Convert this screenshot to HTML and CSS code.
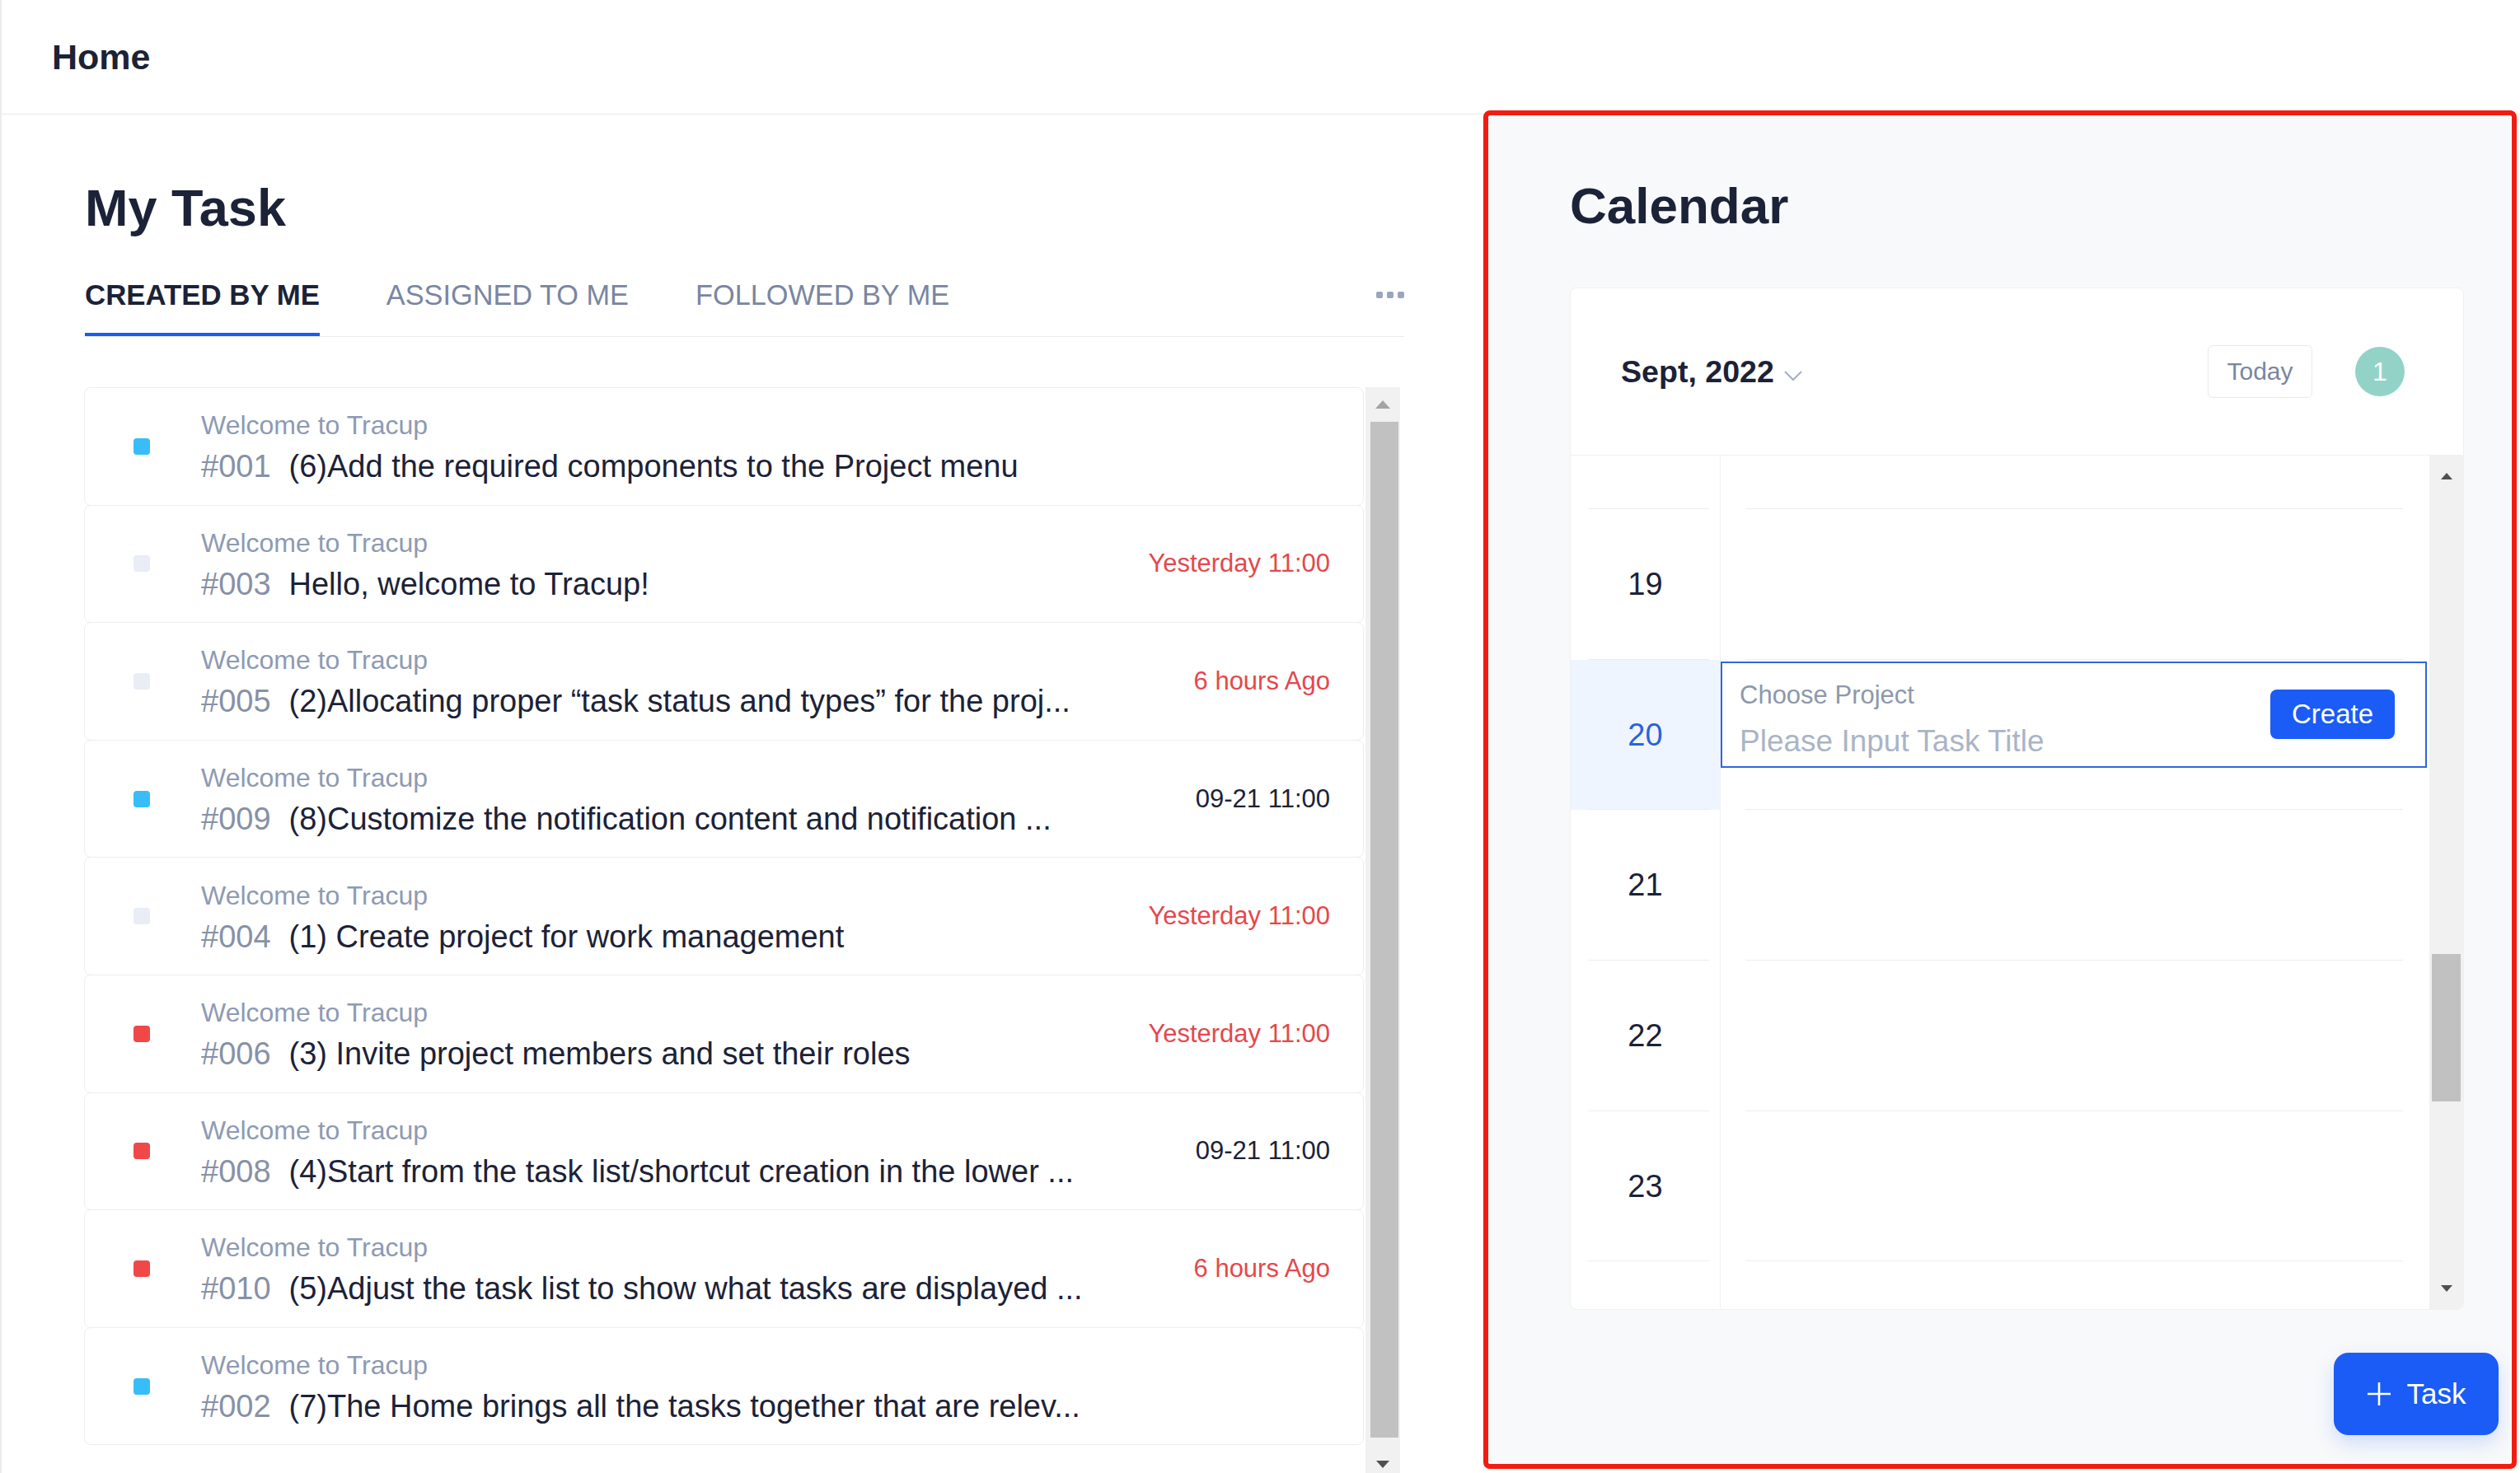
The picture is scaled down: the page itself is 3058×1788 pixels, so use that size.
FILE: index.html
```html
<!DOCTYPE html>
<html lang="en">
<head>
<meta charset="utf-8">
<title>Home</title>
<link rel="stylesheet" href="styles.css">
</head>
<body>
<div class="app">
  <header class="header"><span class="header-title">Home</span></header>
  <div class="main">
    <section class="left">
      <h1 class="heading">My Task</h1>
      <nav class="tabs">
        <span class="tab tab-active">CREATED BY ME</span>
        <span class="tab">ASSIGNED TO ME</span>
        <span class="tab">FOLLOWED BY ME</span>
        <span class="more"><i></i><i></i><i></i></span>
      </nav>
      <div class="list">
        <div class="rows">
          <div class="row">
            <span class="sq sq-blue"></span>
            <div class="txt"><div class="sub">Welcome to Tracup</div><div class="title"><span class="num">#001</span>(6)Add the required components to the Project menu</div></div>
          </div>
          <div class="row">
            <span class="sq sq-grey"></span>
            <div class="txt"><div class="sub">Welcome to Tracup</div><div class="title"><span class="num">#003</span>Hello, welcome to Tracup!</div></div>
            <span class="time time-red">Yesterday 11:00</span>
          </div>
          <div class="row">
            <span class="sq sq-grey"></span>
            <div class="txt"><div class="sub">Welcome to Tracup</div><div class="title"><span class="num">#005</span>(2)Allocating proper “task status and types” for the proj...</div></div>
            <span class="time time-red">6 hours Ago</span>
          </div>
          <div class="row">
            <span class="sq sq-blue"></span>
            <div class="txt"><div class="sub">Welcome to Tracup</div><div class="title"><span class="num">#009</span>(8)Customize the notification content and notification ...</div></div>
            <span class="time">09-21 11:00</span>
          </div>
          <div class="row">
            <span class="sq sq-grey"></span>
            <div class="txt"><div class="sub">Welcome to Tracup</div><div class="title"><span class="num">#004</span>(1) Create project for work management</div></div>
            <span class="time time-red">Yesterday 11:00</span>
          </div>
          <div class="row">
            <span class="sq sq-red"></span>
            <div class="txt"><div class="sub">Welcome to Tracup</div><div class="title"><span class="num">#006</span>(3) Invite project members and set their roles</div></div>
            <span class="time time-red">Yesterday 11:00</span>
          </div>
          <div class="row">
            <span class="sq sq-red"></span>
            <div class="txt"><div class="sub">Welcome to Tracup</div><div class="title"><span class="num">#008</span>(4)Start from the task list/shortcut creation in the lower ...</div></div>
            <span class="time">09-21 11:00</span>
          </div>
          <div class="row">
            <span class="sq sq-red"></span>
            <div class="txt"><div class="sub">Welcome to Tracup</div><div class="title"><span class="num">#010</span>(5)Adjust the task list to show what tasks are displayed ...</div></div>
            <span class="time time-red">6 hours Ago</span>
          </div>
          <div class="row">
            <span class="sq sq-blue"></span>
            <div class="txt"><div class="sub">Welcome to Tracup</div><div class="title"><span class="num">#002</span>(7)The Home brings all the tasks together that are relev...</div></div>
          </div>
        </div>
        <div class="sbar sbar-list">
          <div class="sb-up"><svg width="18" height="10" viewBox="0 0 18 10"><polygon points="9,0 18,10 0,10" fill="#a3a3a3"/></svg></div>
          <div class="sb-thumb"></div>
          <div class="sb-down"><svg width="16" height="9" viewBox="0 0 16 9"><polygon points="0,0 16,0 8,9" fill="#505050"/></svg></div>
        </div>
      </div>
    </section>

    <section class="right">
      <h1 class="heading">Calendar</h1>
      <div class="card">
        <div class="card-head">
          <span class="month">Sept, 2022</span>
          <svg class="chev" width="24" height="14" viewBox="0 0 24 14"><polyline points="2,2 12,12 22,2" fill="none" stroke="#a4afc0" stroke-width="2"/></svg>
          <span class="today">Today</span>
          <span class="badge">1</span>
        </div>
        <div class="card-body">
          <div class="days">
            <div class="day day-part-top"><div class="d-num"></div><div class="d-ev"></div></div>
            <div class="day"><div class="d-num">19</div><div class="d-ev"></div></div>
            <div class="day day-cur"><div class="d-num">20</div><div class="d-ev">
              <div class="newtask">
                <div class="nt-text"><div class="nt-proj">Choose Project</div><div class="nt-title">Please Input Task Title</div></div>
                <span class="create">Create</span>
              </div>
            </div></div>
            <div class="day"><div class="d-num">21</div><div class="d-ev"></div></div>
            <div class="day"><div class="d-num">22</div><div class="d-ev"></div></div>
            <div class="day"><div class="d-num">23</div><div class="d-ev"></div></div>
            <div class="day day-part-bottom"><div class="d-num"></div><div class="d-ev"></div></div>
          </div>
          <div class="sbar sbar-cal">
            <div class="sb-up"><svg width="14" height="8" viewBox="0 0 14 8"><polygon points="7,0 14,8 0,8" fill="#505050"/></svg></div>
            <div class="sb-thumb"></div>
            <div class="sb-down"><svg width="14" height="8" viewBox="0 0 14 8"><polygon points="0,0 14,0 7,8" fill="#505050"/></svg></div>
          </div>
        </div>
      </div>
      <div class="fab">
        <svg width="30" height="30" viewBox="0 0 30 30"><path d="M15 1V29M1 15H29" stroke="#fff" stroke-width="2.6" fill="none"/></svg>
        <span>Task</span>
      </div>
    </section>
  </div>
</div>
</body>
</html>
```

FILE: styles.css
```css
* { box-sizing: border-box; }
html, body { margin: 0; padding: 0; }
body {
  width: 3058px;
  height: 1788px;
  overflow: hidden;
  background: #ffffff;
  font-family: "Liberation Sans", Arial, sans-serif;
  color: #1c2237;
}
.app {
  height: 1788px;
  display: flex;
  flex-direction: column;
  border-left: 2px solid #ececee;
}
.header {
  height: 139px;
  flex: none;
  border-bottom: 1px solid #e8eaee;
  display: flex;
  align-items: center;
  padding-left: 61px;
}
.header-title {
  font-size: 43px;
  font-weight: 700;
  color: #1c2237;
}
.main {
  flex: 1;
  display: flex;
  min-height: 0;
}
.left {
  width: 1798px;
  flex: none;
  display: flex;
  flex-direction: column;
  padding: 77px 96px 0 101px;
}
.heading {
  margin: 0;
  font-size: 63px;
  line-height: 72px;
  font-weight: 700;
  color: #1c2237;
}
.right .heading { font-size: 62px; }
.tabs {
  margin-top: 50px;
  display: flex;
  align-items: flex-start;
  gap: 81px;
  border-bottom: 1px solid #e9ebef;
}
.tab {
  font-size: 34.3px;
  line-height: 40px;
  padding-bottom: 26px;
  border-bottom: 4px solid transparent;
  color: #7a86a1;
}
.tab-active {
  font-size: 34.8px;
  font-weight: 700;
  color: #1c2237;
  border-bottom-color: #1a5cf0;
}
.more {
  margin-left: auto;
  margin-top: 16px;
  display: flex;
  gap: 5px;
}
.more i {
  width: 8px;
  height: 8px;
  border-radius: 2px;
  background: #9aa6bd;
}
.list {
  margin-top: 61px;
  margin-left: -1px;
  flex: 1;
  min-height: 0;
  display: flex;
  overflow: hidden;
}
.rows {
  width: 1553px;
  flex: none;
  display: flex;
  flex-direction: column;
}
.row {
  height: 143.6px;
  flex: none;
  border: 1px solid #eceef2;
  border-radius: 8px;
  display: flex;
  align-items: center;
  padding: 0 40px 0 59px;
}
.row + .row { margin-top: -1px; }
.sq {
  width: 20px;
  height: 20px;
  border-radius: 4px;
  flex: none;
  margin-right: 62px;
}
.sq-blue { background: #38bdf8; }
.sq-grey { background: #e8edf6; }
.sq-red { background: #f04848; }
.txt {
  flex: 1;
  min-width: 0;
  margin-top: 3px;
}
.sub {
  font-size: 32px;
  line-height: 44px;
  color: #8e9ab3;
}
.title {
  margin-top: 2px;
  font-size: 38px;
  line-height: 52px;
  color: #1c2237;
  white-space: nowrap;
}
.num {
  color: #8791a7;
  margin-right: 22px;
}
.time {
  font-size: 31px;
  color: #1c2237;
  white-space: nowrap;
}
.time-red { color: #e5484d; }

.sbar {
  display: flex;
  flex-direction: column;
  background: #f1f1f1;
  flex: none;
}
.sbar-list {
  width: 42px;
  margin-left: 2px;
}
.sbar-list .sb-up {
  height: 42px;
  display: flex;
  align-items: center;
  justify-content: center;
}
.sbar-list .sb-thumb {
  height: 1233px;
  margin: 0 2px 0 6px;
  background: #c1c1c1;
}
.sbar-list .sb-down {
  flex: 1;
  display: flex;
  align-items: flex-end;
  justify-content: center;
  padding-bottom: 6px;
}

.right {
  flex: 1;
  min-width: 0;
  margin: -5px 4px 5px 0;
  border: 6px solid #f21c10;
  border-radius: 8px;
  background: #f8f9fa;
  display: flex;
  flex-direction: column;
  padding: 74px 16px 0 99px;
}
.card {
  margin-top: 63px;
  margin-right: 42px;
  height: 1241px;
  background: #ffffff;
  border: 1px solid #eef0f3;
  border-radius: 8px;
  display: flex;
  flex-direction: column;
  overflow: hidden;
}
.card-head {
  height: 203px;
  flex: none;
  border-bottom: 1px solid #eef0f3;
  display: flex;
  align-items: center;
  padding: 0 71px 0 61px;
}
.month {
  font-size: 37.6px;
  font-weight: 700;
  color: #1c2237;
}
.chev {
  margin-left: 11px;
  margin-top: 10px;
}
.today {
  margin-left: auto;
  width: 127px;
  height: 64px;
  border: 1px solid #e6e9ef;
  border-radius: 6px;
  display: flex;
  align-items: center;
  justify-content: center;
  font-size: 30px;
  color: #7a86a1;
}
.badge {
  margin-left: 52px;
  width: 60px;
  height: 60px;
  border-radius: 50%;
  background: #93d3c7;
  color: #ffffff;
  font-size: 32px;
  display: flex;
  align-items: center;
  justify-content: center;
}
.card-body {
  flex: 1;
  min-height: 0;
  display: flex;
}
.days {
  flex: 1;
  min-width: 0;
  display: flex;
  flex-direction: column;
  overflow: hidden;
}
.day {
  height: 182.7px;
  flex: none;
  display: flex;
}
.day-part-top { height: 65px; }
.day-part-bottom { flex: 1; height: auto; }
.d-num {
  width: 182px;
  flex: none;
  border-right: 1px solid #f0f1f3;
  display: flex;
  align-items: center;
  justify-content: center;
  font-size: 38px;
  color: #1c2237;
  background: linear-gradient(#eceef1, #eceef1) no-repeat 21px 100% / calc(100% - 34px) 1px;
}
.d-ev {
  flex: 1;
  min-width: 0;
  background: linear-gradient(#eceef1, #eceef1) no-repeat 30px 100% / calc(100% - 62px) 1px;
}
.day-part-bottom .d-num,
.day-part-bottom .d-ev { background: none; }
.day-cur .d-num {
  background-color: #eef5fe;
  color: #2b63d9;
}
.newtask {
  margin: 2px 3px 0 0;
  height: 129px;
  border: 2px solid #2e66df;
  display: flex;
  align-items: center;
  padding: 0 37px 0 21px;
  background: #ffffff;
}
.nt-text {
  flex: 1;
  align-self: stretch;
  padding-top: 19px;
}
.nt-proj {
  font-size: 31px;
  line-height: 40px;
  color: #8e98ab;
}
.nt-title {
  margin-top: 11px;
  font-size: 37px;
  line-height: 50px;
  color: #aab4c6;
}
.create {
  width: 151px;
  height: 60px;
  border-radius: 8px;
  background: #1a5cf5;
  color: #ffffff;
  font-size: 33px;
  display: flex;
  align-items: center;
  justify-content: center;
}
.sbar-cal {
  width: 41px;
}
.sbar-cal .sb-up {
  height: 50px;
  display: flex;
  align-items: center;
  justify-content: center;
}
.sbar-cal .sb-thumb {
  margin: 555px 3px 0 3px;
  height: 179px;
  background: #c1c1c1;
}
.sbar-cal .sb-down {
  flex: 1;
  display: flex;
  align-items: flex-end;
  justify-content: center;
  padding-bottom: 21px;
}
.fab {
  margin-top: 52px;
  align-self: flex-end;
  width: 200px;
  height: 100px;
  border-radius: 18px;
  background: #1a5cf5;
  box-shadow: 0 10px 24px rgba(26, 92, 245, 0.18);
  display: flex;
  align-items: center;
  justify-content: center;
  gap: 19px;
  color: #ffffff;
  font-size: 35px;
}
```
